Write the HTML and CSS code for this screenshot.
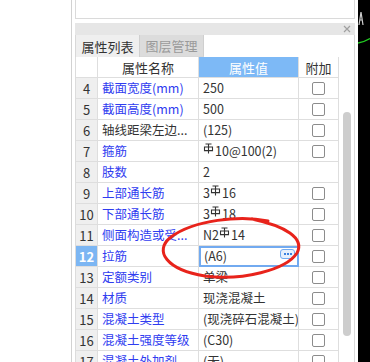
FILE: index.html
```html
<!DOCTYPE html>
<html lang="zh">
<head>
<meta charset="utf-8">
<link rel="stylesheet" href="styles.css">
</head>
<body>
<div class="screen">
  <div class="side"></div>
  <div class="panel">
    <div class="topbox"></div>
    <div class="titlebar">
      <svg class="close" width="8" height="8" viewBox="0 0 8 8"><path d="M1 1L7 7M7 1L1 7" stroke="#a0a0a0" stroke-width="1.2"/></svg>
    </div>
    <div class="tabs">
      <div class="tab active">属性列表</div>
      <div class="tab">图层管理</div>
    </div>
    <div class="table">
      <div class="grid">
        <div class="c num head"></div><div class="c head center">属性名称</div><div class="c head val-head center">属性值</div><div class="c head center">附加</div>

        <div class="c num">4</div><div class="c name">截面宽度(mm)</div><div class="c val">250</div><div class="c chk"><span class="box"></span></div>
        <div class="c num">5</div><div class="c name">截面高度(mm)</div><div class="c val">500</div><div class="c chk"><span class="box"></span></div>
        <div class="c num">6</div><div class="c name dark">轴线距梁左边...</div><div class="c val">(125)</div><div class="c chk"><span class="box"></span></div>
        <div class="c num">7</div><div class="c name">箍筋</div><div class="c val"><svg class="bar" width="11" height="11" viewBox="0 0 11 11"><path d="M2.5 1H8.5M5.5 1V10.5M1.5 4H9.5V7.6H1.5Z" stroke="#333" stroke-width="1.1" fill="none"/></svg>10@100(2)</div><div class="c chk"><span class="box"></span></div>
        <div class="c num">8</div><div class="c name">肢数</div><div class="c val">2</div><div class="c chk"></div>
        <div class="c num">9</div><div class="c name">上部通长筋</div><div class="c val">3<svg class="bar" width="11" height="11" viewBox="0 0 11 11"><path d="M2.5 1H8.5M5.5 1V10.5M1.5 4H9.5V7.6H1.5Z" stroke="#333" stroke-width="1.1" fill="none"/></svg>16</div><div class="c chk"><span class="box"></span></div>
        <div class="c num">10</div><div class="c name">下部通长筋</div><div class="c val">3<svg class="bar" width="11" height="11" viewBox="0 0 11 11"><path d="M2.5 1H8.5M5.5 1V10.5M1.5 4H9.5V7.6H1.5Z" stroke="#333" stroke-width="1.1" fill="none"/></svg>18</div><div class="c chk"><span class="box"></span></div>
        <div class="c num">11</div><div class="c name">侧面构造或受...</div><div class="c val">N2<svg class="bar" width="11" height="11" viewBox="0 0 11 11"><path d="M2.5 1H8.5M5.5 1V10.5M1.5 4H9.5V7.6H1.5Z" stroke="#333" stroke-width="1.1" fill="none"/></svg>14</div><div class="c chk"><span class="box"></span></div>
        <div class="c num sel">12</div><div class="c name">拉筋</div><div class="c val edit"><span>(A6)</span><span class="more"><i></i><i></i><i></i></span></div><div class="c chk"><span class="box"></span></div>
        <div class="c num">13</div><div class="c name">定额类别</div><div class="c val">单梁</div><div class="c chk"><span class="box"></span></div>
        <div class="c num">14</div><div class="c name">材质</div><div class="c val">现浇混凝土</div><div class="c chk"><span class="box"></span></div>
        <div class="c num">15</div><div class="c name">混凝土类型</div><div class="c val">(现浇碎石混凝土)</div><div class="c chk"><span class="box"></span></div>
        <div class="c num">16</div><div class="c name">混凝土强度等级</div><div class="c val">(C30)</div><div class="c chk"><span class="box"></span></div>
        <div class="c num">17</div><div class="c name">混凝土外加剂</div><div class="c val">(无)</div><div class="c chk"><span class="box"></span></div>
      </div>
      <div class="scroll"><div class="thumb"></div></div>
    </div>
  </div>
  <div class="canvas">
    <svg width="12" height="60" viewBox="0 0 12 60"><path d="M1 25L3 12L5 25M1.5 20H4.5" stroke="#cfcfcf" stroke-width="1.2" fill="none"/><path d="M0 43Q6 42 12 38.5" stroke="#22cc22" stroke-width="1.3" fill="none"/></svg>
  </div>
</div>
<svg class="mark" width="370" height="362" viewBox="0 0 370 362"><path d="M268 221C240 215 194 220 171 237C153 251 167 270 205 276C242 281 286 270 297 253C305 238 285 226 252 219" stroke="#e8231b" stroke-width="3" fill="none" stroke-linecap="round"/></svg>
</body>
</html>
```
FILE: styles.css
```css
html, body {
  margin: 0;
  padding: 0;
  background: #fff;
  font-family: "Noto Sans CJK SC", "Noto Sans", sans-serif;
  font-size: 12px;
  color: #333;
}
.screen {
  display: flex;
  width: 370px;
  height: 362px;
  overflow: hidden;
}
.side {
  width: 71px;
  border-right: 1px solid #d2d2d2;
  flex: none;
}
.panel {
  width: 280px;
  margin-left: 3px;
  flex: none;
  display: flex;
  flex-direction: column;
}
.panel > * { flex: none; }
.topbox {
  height: 19px;
  box-sizing: border-box;
  border: 1px solid #dadada;
  border-top: none;
  background: #fff;
}
.titlebar {
  margin-top: 4px;
  height: 12px;
  background: #e6e6e6;
  display: flex;
  justify-content: flex-end;
  align-items: center;
  padding-right: 4px;
}
.tabs {
  height: 22px;
  box-sizing: border-box;
  display: flex;
  border-left: 1px solid #d8d8d8;
  border-right: 1px solid #d8d8d8;
  background: #fff;
  font-size: 13px;
}
.tab {
  width: 64px;
  box-sizing: border-box;
  display: flex;
  align-items: center;
  justify-content: center;
  background: #dcdcdc;
  color: #9a9a9a;
  border-right: 1px solid #cfcfcf;
  border-bottom: 1px solid #d8d8d8;
  line-height: 1;
}
.tab.active {
  background: #efefef;
  color: #333;
  border-bottom: none;
}
.table {
  display: flex;
  border-left: 1px solid #dcdcdc;
}
.grid {
  display: grid;
  grid-template-columns: 22px 101px 100px 40px;
  grid-auto-rows: 21px;
}
.c {
  box-sizing: border-box;
  border-right: 1px solid #dedede;
  border-bottom: 1px solid #dedede;
  display: flex;
  align-items: center;
  white-space: nowrap;
  overflow: hidden;
  line-height: 1;
  background: #fff;
}
.center { justify-content: center; }
.head { color: #333; font-size: 13px; }
.val-head {
  background: #7db9f6;
  color: #fff;
}
.num {
  background: #efefef;
  justify-content: center;
  color: #333;
  font-size: 13px;
}
.num.head { background: #fff; }
.num.sel {
  background: #7cb6f3;
  color: #fff;
  font-weight: bold;
}
.name {
  color: #2f3cf0;
  padding-left: 4px;
  font-size: 12.5px;
}
.name.dark { color: #333; }
.val {
  padding-left: 4px;
  color: #333;
  font-size: 12.5px;
}
.bar {
  margin: 0 1px 5px 0;
  flex: none;
}
.val.edit {
  border: 2px solid #72aaf0;
  padding-left: 3px;
  justify-content: space-between;
  padding-right: 2px;
}
.more {
  width: 15px;
  height: 10px;
  box-sizing: border-box;
  border: 1px solid #72aaf0;
  border-radius: 3px;
  background: #e6f0fc;
  display: flex;
  align-items: center;
  justify-content: center;
  gap: 1px;
  margin-top: -5px;
}
.more i {
  width: 2px;
  height: 2px;
  background: #3b82e0;
  display: block;
}
.chk {
  justify-content: center;
}
.box {
  width: 13px;
  height: 13px;
  box-sizing: border-box;
  border: 1px solid #8c8c8c;
  border-radius: 2px;
  background: #fff;
}
.scroll {
  width: 16px;
  box-sizing: border-box;
  border-right: 1px solid #dadada;
  padding: 55px 3px 0 4px;
  background: #fff;
}
.thumb {
  width: 8px;
  height: 224px;
  border-radius: 4px;
  background: #cdcdcd;
}
.canvas {
  margin-left: 3px;
  flex: 1;
  background: #000;
}
.canvas svg { display: block; }
.mark {
  position: absolute;
  left: 0;
  top: 0;
  pointer-events: none;
}
```
